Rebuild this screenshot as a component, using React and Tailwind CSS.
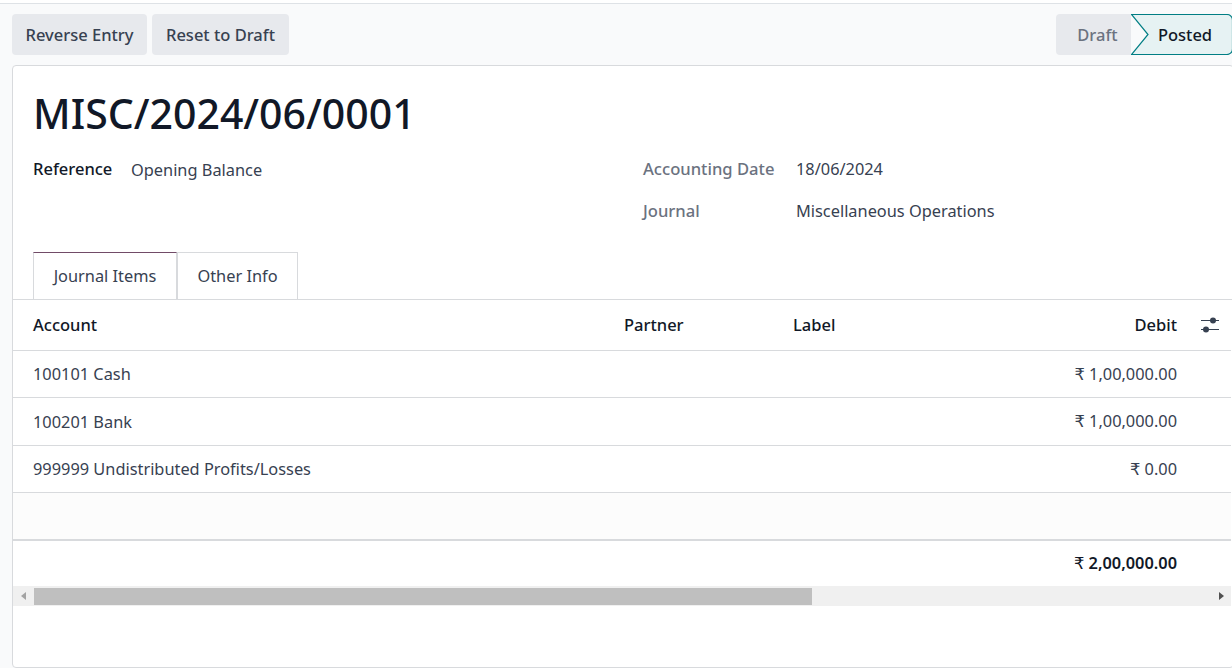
import React from 'react'

const rows = [
  { account: '100101 Cash', debit: '1,00,000.00', height: 'h-[47px]' },
  { account: '100201 Bank', debit: '1,00,000.00', height: 'h-[48px]' },
  { account: '999999 Undistributed Profits/Losses', debit: '0.00', height: 'h-[47px]' },
]

const gridCols = 'grid grid-cols-[591px_169px_1fr_165px_54px] items-center'

const Amount = ({ value }) => (
  <span className="text-right">
    <span className="font-['DejaVu_Sans',sans-serif] font-normal">₹</span> {value}
  </span>
)

const App = () => {
  return (
    <div className="h-[668px] w-[1232px] overflow-hidden bg-[#f9fafb] font-['Noto_Sans',sans-serif] text-[16.35px] text-[#374151]">
      <div className="h-[4px] border-b border-[#dee2e6] bg-white" />

      {/* Control panel */}
      <div className="flex h-[61px] items-start justify-between pt-[10px] pl-3">
        <div className="flex gap-[5px] text-[16.5px] font-medium">
          <button className="flex h-[41px] w-[135px] items-center justify-center rounded-[4px] bg-[#e7e9ed] pt-[1px]">Reverse Entry</button>
          <button className="flex h-[41px] w-[137px] items-center justify-center rounded-[4px] bg-[#e7e9ed] pt-[1px]">Reset to Draft</button>
        </div>
        <div className="flex h-[41px] text-[16.5px] font-medium">
          <div className="flex w-[75px] items-center justify-center rounded-l-[4px] bg-[#e7e9ed] pt-[1px] pl-[8px] text-[#6b7280]">Draft</div>
          <div className="relative flex w-[101px] items-center justify-center pt-[1px] pl-[7px] text-[#111827]">
            <svg className="absolute top-0 left-0" width="103" height="41" viewBox="0 0 103 41">
              <path d="M0.5 0.5H96a5.5 5.5 0 0 1 5.5 5.5V35a5.5 5.5 0 0 1-5.5 5.5H0.5L17 20.5Z" fill="#e6f2f3" stroke="#017e84" strokeWidth="1.2" />
            </svg>
            <span className="relative">Posted</span>
          </div>
        </div>
      </div>

      {/* Form sheet */}
      <div className="-mr-[2px] ml-3 h-[603px] rounded-[4px] border border-[#d8dadd] bg-white">
        <h1 className="mt-[17px] ml-5 text-[41px] leading-[60px] font-medium text-[#111827]">MISC/2024/06/0001</h1>

        <div className="mt-[11px] ml-5 flex h-[98px] w-[1100px]">
          <div className="flex w-[610px] items-start">
            <span className="mt-[3px] w-[98px] text-[16.5px] leading-[24px] font-medium text-[#111827]">Reference</span>
            <span className="mt-[4px] leading-[24px]">Opening Balance</span>
          </div>
          <div className="flex flex-col gap-[18px] pt-[3px]">
            <div className="flex h-[24px] items-center">
              <span className="w-[153px] text-[16.6px] font-medium text-[#6b7280]">Accounting Date</span>
              <span>18/06/2024</span>
            </div>
            <div className="flex h-[24px] items-center">
              <span className="w-[153px] text-[16.6px] font-medium text-[#6b7280]">Journal</span>
              <span>Miscellaneous Operations</span>
            </div>
          </div>
        </div>

        {/* Tabs */}
        <div className="flex h-[48px] border-b border-[#d8dadd] pl-5">
          <div className="-mb-px flex w-[144px] items-center justify-center border border-[#d8dadd] border-t-[#714b67] bg-white">Journal Items</div>
          <div className="-mb-px flex w-[121px] items-center justify-center border border-[#d8dadd] bg-white">Other Info</div>
        </div>

        {/* Lines */}
        <div className="w-[1218px]">
          <div className={`${gridCols} h-[51px] border-b border-[#d8dadd] pl-5 text-[16.5px] font-medium text-[#111827]`}>
            <span>Account</span>
            <span>Partner</span>
            <span>Label</span>
            <span className="text-right">Debit</span>
            <span className="flex justify-end pr-[11px]">
              <svg width="20" height="16" viewBox="0 0 20 16" fill="none">
                <path d="M1 3.5H19M1 12.5H19" stroke="#374151" strokeWidth="1.2" />
                <circle cx="13" cy="3.5" r="3" fill="#374151" />
                <circle cx="6" cy="12.5" r="3" fill="#374151" />
              </svg>
            </span>
          </div>
          {rows.map((row) => (
            <div key={row.account} className={`${gridCols} ${row.height} border-b border-[#d8dadd] pt-[1px] pl-5`}>
              <span className="col-span-3">{row.account}</span>
              <Amount value={row.debit} />
            </div>
          ))}
          <div className="h-[48px] border-b-2 border-[#d8dadd] bg-[#fcfcfc]" />
          <div className={`${gridCols} h-[45px] pl-5 font-semibold text-[#111827]`}>
            <span className="col-span-3" />
            <Amount value="2,00,000.00" />
          </div>

          {/* Horizontal scrollbar */}
          <div className="flex h-[20px] items-center bg-[#f0f0f0]">
            <div className="flex w-[21px] justify-center">
              <div className="h-0 w-0 border-y-[4px] border-r-[5px] border-y-transparent border-r-[#a3a3a3]" />
            </div>
            <div className="h-[17px] w-[778px] bg-[#bfbfbf]" />
            <div className="ml-auto flex w-[20px] justify-center">
              <div className="h-0 w-0 border-y-[4px] border-l-[5px] border-y-transparent border-l-[#505050]" />
            </div>
          </div>
        </div>
      </div>
    </div>
  )
}

export default App
